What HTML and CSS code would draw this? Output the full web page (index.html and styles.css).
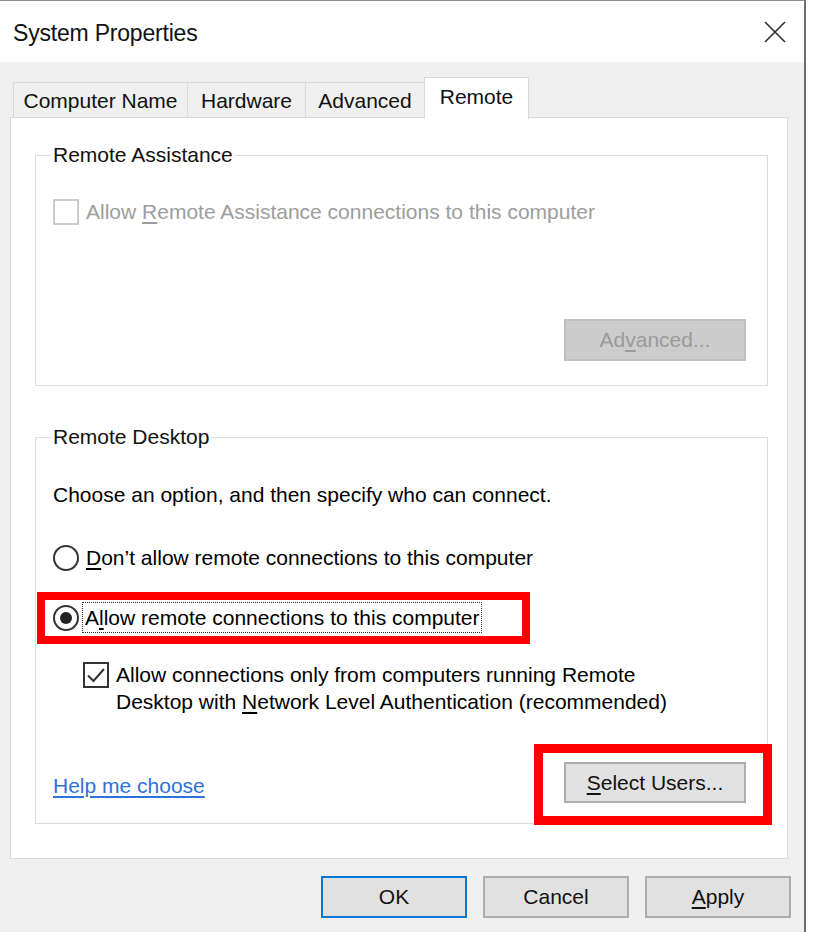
FILE: index.html
```html
<!DOCTYPE html>
<html lang="en">
<head>
<meta charset="utf-8">
<title>System Properties</title>
<link rel="stylesheet" href="styles.css">
</head>
<body>
<div class="window">
  <div class="titlebar">
    <span class="title">System Properties</span>
    <svg class="close" width="22" height="22" viewBox="0 0 22 22" aria-hidden="true"><path d="M1 1L21 21M21 1L1 21"/></svg>
  </div>
  <div class="client">
    <div class="tabs">
      <div class="tab tab-name">Computer Name</div>
      <div class="tab tab-hw">Hardware</div>
      <div class="tab tab-adv">Advanced</div>
      <div class="tab tab-remote is-active">Remote</div>
    </div>
    <div class="panel">
      <fieldset class="group group-assist">
        <legend>Remote Assistance</legend>
        <div class="check is-disabled">
          <span class="box"></span>
          <span class="label">Allow <u>R</u>emote Assistance connections to this computer</span>
        </div>
        <div class="assist-actions">
          <button class="btn btn-disabled" type="button">Ad<u>v</u>anced...</button>
        </div>
      </fieldset>
      <fieldset class="group group-desktop">
        <legend>Remote Desktop</legend>
        <p class="intro">Choose an option, and then specify who can connect.</p>
        <div class="radio radio-deny">
          <span class="dot"></span>
          <span class="label"><u>D</u>on’t allow remote connections to this computer</span>
        </div>
        <div class="radio radio-allow is-checked">
          <span class="dot"></span>
          <span class="label focus">A<u>l</u>low remote connections to this computer</span>
          <span class="mark mark-radio"></span>
        </div>
        <div class="check check-nla">
          <span class="box is-checked">
            <svg width="22" height="22" viewBox="0 0 22 22" aria-hidden="true"><path d="M3 11.5L8.5 17L19 5"/></svg>
          </span>
          <span class="label">Allow connections only from computers running Remote<br>Desktop with <u>N</u>etwork Level Authentication (recommended)</span>
        </div>
        <div class="desktop-actions">
          <a class="help" href="#">Help me choose</a>
          <div class="select-wrap">
            <button class="btn btn-select" type="button"><u>S</u>elect Users...</button>
            <span class="mark mark-select"></span>
          </div>
        </div>
      </fieldset>
    </div>
    <div class="footer">
      <button class="btn btn-footer btn-default" type="button">OK</button>
      <button class="btn btn-footer" type="button">Cancel</button>
      <button class="btn btn-footer" type="button"><u>A</u>pply</button>
    </div>
  </div>
</div>
</body>
</html>
```

FILE: styles.css
```css
* {
  box-sizing: border-box;
}

html, body {
  margin: 0;
  background: #ffffff;
}

body {
  font-family: "Liberation Sans", Arial, sans-serif;
  font-size: 21px;
  color: #000000;
}

u {
  text-decoration: underline;
  text-decoration-thickness: 2px;
  text-underline-offset: 3px;
}

.window {
  width: 806px;
  height: 932px;
  border-top: 1px solid #8e8e8e;
  border-right: 2px solid #6e6e6e;
  display: flex;
  flex-direction: column;
}

.titlebar {
  height: 61px;
  flex: none;
  background: #ffffff;
  display: flex;
  align-items: center;
  justify-content: space-between;
  padding: 0 18px 0 13px;
}

.title {
  font-size: 23px;
  color: #111111;
  letter-spacing: -0.2px;
  padding-top: 3px;
}

.close path {
  stroke: #2b2b2b;
  stroke-width: 1.6;
  fill: none;
}

.client {
  flex: 1;
  background: #f0f0f0;
  padding-top: 15px;
}

/* tabs */
.tabs {
  display: flex;
  align-items: flex-end;
  margin-left: 13px;
  height: 42px;
}

.tab {
  height: 35px;
  margin-bottom: 2px;
  border: 1px solid #d9d9d9;
  border-bottom: none;
  background: #f0f0f0;
  display: flex;
  align-items: center;
  justify-content: center;
  color: #111111;
  padding-top: 1px;
}

.tab + .tab {
  margin-left: -1px;
}

.tab-name { width: 175px; }
.tab-hw { width: 119px; }
.tab-adv { width: 120px; }
.tab-remote { width: 105px; }

.tab.is-active {
  position: relative;
  z-index: 1;
  height: 42px;
  margin-bottom: 0;
  background: #ffffff;
  padding-top: 0;
  padding-bottom: 3px;
}

/* panel */
.panel {
  position: relative;
  z-index: 0;
  margin: -2px 0 0 10px;
  width: 778px;
  background: #ffffff;
  border: 1px solid #d9d9d9;
  padding: 25px 19px 34px 24px;
}

.group {
  margin: 0;
  border: 1px solid #dcdcdc;
  min-width: 0;
}

.group legend {
  padding: 0 2px;
  margin-left: -2px;
  line-height: 24px;
  color: #111111;
}

.group-assist {
  padding: 32px 21px 24px 17px;
}

.group-desktop {
  margin-top: 39px;
  padding: 33px 21px 20px 17px;
}

/* checkbox */
.check {
  display: flex;
  align-items: flex-start;
  line-height: 26px;
}

.box {
  width: 26px;
  height: 26px;
  flex: none;
  border: 2px solid #333333;
  margin-right: 7px;
  display: flex;
  align-items: center;
  justify-content: center;
}

.box svg path {
  fill: none;
  stroke: #333333;
  stroke-width: 2;
}

.check.is-disabled .box {
  border-color: #cccccc;
}

.check.is-disabled .label {
  color: #9d9d9d;
}

.check-nla {
  margin-top: 30px;
  margin-left: 30px;
  line-height: 27px;
}

.check-nla .box {
  margin-top: 1px;
}

/* buttons */
.btn {
  font: inherit;
  color: #111111;
  background: #e1e1e1;
  border: 2px solid #adadad;
  height: 42px;
  padding: 0;
  display: flex;
  align-items: center;
  justify-content: center;
}

.assist-actions {
  display: flex;
  justify-content: flex-end;
  margin-top: 94px;
}

.btn-disabled {
  width: 182px;
  background: #cccccc;
  border-color: #bfbfbf;
  color: #9a9a9a;
}

/* remote desktop */
.intro {
  margin: 0;
  line-height: 26px;
}

.radio {
  display: flex;
  align-items: center;
  line-height: 26px;
}

.radio-deny {
  margin-top: 37px;
}

.radio-allow {
  margin-top: 33px;
  position: relative;
}

.dot {
  width: 26px;
  height: 26px;
  flex: none;
  border: 2px solid #333333;
  border-radius: 50%;
  margin-right: 7px;
  display: flex;
  align-items: center;
  justify-content: center;
}

.radio.is-checked .dot::after {
  content: "";
  width: 12px;
  height: 12px;
  border-radius: 50%;
  background: #222222;
}

.focus {
  outline: 1px dotted #333333;
  outline-offset: 1px;
  margin-left: -2px;
  padding-left: 1px;
  line-height: 27px;
}

.mark {
  position: absolute;
  border: 8px solid #ff0000;
  pointer-events: none;
}

.mark-radio {
  left: -16px;
  top: -12px;
  width: 493px;
  height: 52px;
}

.desktop-actions {
  margin-top: 47px;
  display: flex;
  justify-content: space-between;
  align-items: center;
}

.help {
  color: #2f72d8;
  text-decoration: underline;
  text-decoration-thickness: 2px;
  text-underline-offset: 3px;
  line-height: 26px;
  margin-top: 7px;
}

.select-wrap {
  position: relative;
}

.btn-select {
  width: 182px;
  height: 41px;
}

.mark-select {
  left: -30px;
  top: -18px;
  width: 238px;
  height: 81px;
  border-width: 9px;
}

/* footer */
.footer {
  display: flex;
  justify-content: flex-end;
  gap: 16px;
  margin-top: 17px;
  padding-right: 13px;
}

.btn-footer {
  width: 146px;
}

.btn-default {
  border-color: #0078d7;
}
```
